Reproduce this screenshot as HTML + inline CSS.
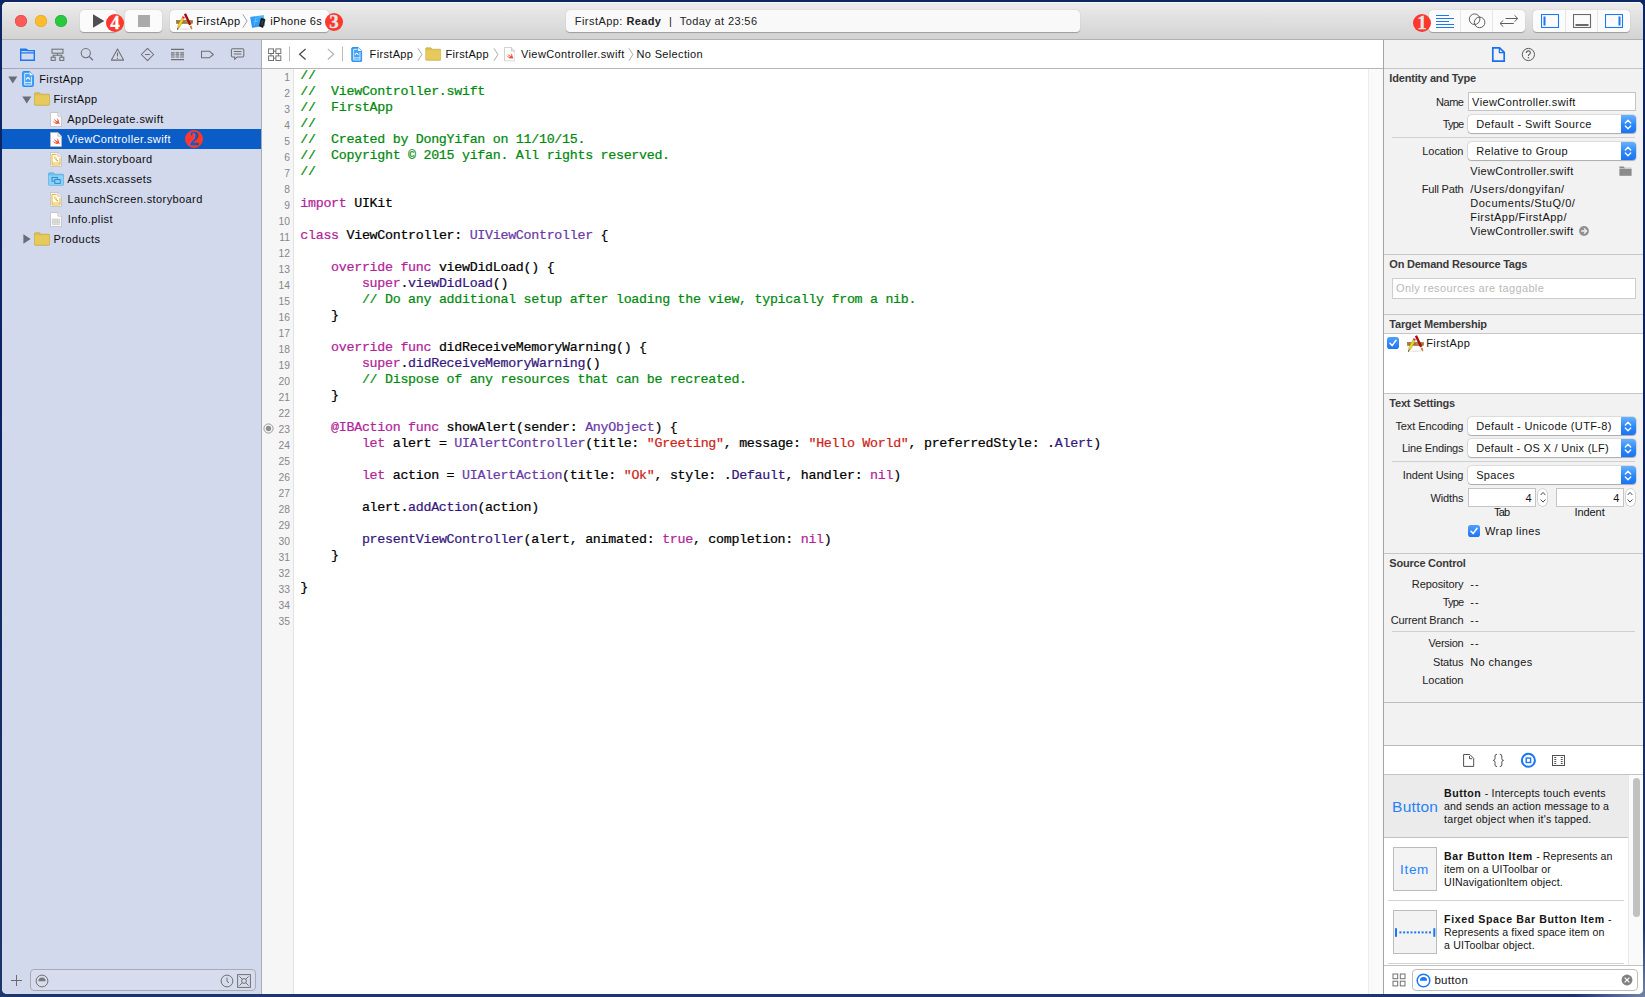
<!DOCTYPE html>
<html><head>
<meta charset="utf-8">
<title>Xcode</title>
<style>
*{box-sizing:border-box;margin:0;padding:0}
html,body{width:1645px;height:997px;overflow:hidden}
body{background:radial-gradient(circle at 100% 100%,#7384a8 0,rgba(115,132,168,0) 70px),linear-gradient(#0d2665 0,#0b2362 40%,#1d376c 100%);font-family:"Liberation Sans",sans-serif;font-size:12px;color:#222;position:relative}
.abs{position:absolute}
#win{position:absolute;left:2px;top:2px;width:1641px;height:992px;border-radius:5px;overflow:hidden;background:#fff}
/* everything inside #win is positioned in page coordinates via #pg offset */
#pg{position:absolute;left:-2px;top:-2px;width:1645px;height:997px}
#tb{left:0;top:2px;width:1645px;height:37px;background:linear-gradient(#ececec,#e4e4e4 30%,#d3d3d3)}
#tbline{left:0;top:39px;width:1645px;height:1px;background:#b1b1b1}
.tl{position:absolute;top:15px;width:12px;height:12px;border-radius:50%}
.btn{position:absolute;top:10px;height:22px;background:#fbfbfb;border-radius:4px;box-shadow:0 0.5px 1px rgba(0,0,0,.28)}
.badge{position:absolute;width:18px;height:18px;border-radius:50%;background:#fc382d;color:#fff;font-family:"Liberation Serif",serif;font-weight:bold;font-size:19px;line-height:18px;text-align:center;-webkit-text-stroke:0.3px}
.act{top:11px;line-height:20px;font-size:11px;color:#232323;white-space:pre}
.jt{font-size:11px!important}
.t12{font-size:11px;white-space:nowrap;color:#111}
/* navigator */
#nav{left:0;top:40px;width:261px;height:957px;background:#d2d9ec}
#navline{left:261px;top:40px;width:1px;height:957px;background:#a9acb6}
#navbar-line{left:0;top:68px;width:261px;height:1px;background:#a6a9b3}
.row{position:absolute;left:2px;width:259px;height:20px}
.row .lbl{position:absolute;top:0;line-height:20px;font-size:11px;color:#0b0b0c;white-space:nowrap}
.row.sel{background:#0a5cc6}
.row.sel .lbl{color:#fff}
/* editor */
#jump{left:262px;top:40px;width:1122px;height:28px;background:#fff}
#jumpline{left:262px;top:68px;width:1122px;height:1px;background:#b5b5b5}
#gutter{left:262px;top:69px;width:31px;height:928px;background:#f6f6f6}
#gutterline{left:293px;top:69px;width:1px;height:928px;background:#e3e3e3}
#code{left:300.3px;top:68px;font-family:"Liberation Mono",monospace;font-size:13.3px;line-height:16px;white-space:pre;color:#000;letter-spacing:-0.281px;-webkit-text-stroke:0.22px}
#lnums{left:250px;top:69px;width:40px;text-align:right;font-family:"Liberation Sans",sans-serif;font-size:11.4px;line-height:16px;color:#86868d;white-space:pre;transform:scaleX(.9);transform-origin:100% 50%}
.c{color:#008a0c}.k{color:#b2239b}.t{color:#6a38a6}.f{color:#35167c}.s{color:#cc2418}
/* inspector */
#insp{left:1384px;top:40px;width:261px;height:957px;background:#f2f2f2}
#inspline{left:1383px;top:40px;width:1px;height:957px;background:#a5a5a5}
.hl{position:absolute;height:1px;background:#c8c8c8}
.sec{position:absolute;left:1389.3px;top:0;font-weight:bold;font-size:11px;color:#3a3a3a;white-space:nowrap;line-height:14px}
.lab{position:absolute;right:181.6px;top:0;font-size:11px;color:#222;white-space:nowrap;line-height:14px}
.lib{font-size:10.6px!important;color:#0c0c0c}
.val{position:absolute;left:1470px;top:0;font-size:11px;color:#131313;white-space:nowrap;line-height:14px}
.pop{position:absolute;left:1468px;width:168px;height:18px;background:#fff;border-radius:3.5px;box-shadow:0 0 0 0.5px rgba(0,0,0,.18),0 1px 1px rgba(0,0,0,.22);font-size:11px;line-height:18px;padding-left:8px;color:#1f1f1f;white-space:nowrap}
.pop i{position:absolute;right:0;top:0;width:15px;height:18px;border-radius:0 3.5px 3.5px 0;background:linear-gradient(#69b1fc,#2a88f7 55%,#1a74f4)}
.fld{position:absolute;background:#fff;border:1px solid #c4c4c4;font-size:11px;color:#1f1f1f;white-space:nowrap}
</style>
</head>
<body>
<div id="win"><div id="pg">

<!-- TOOLBAR -->
<div id="tb" class="abs"></div>
<div id="tbline" class="abs"></div>
<div class="abs" style="left:0;top:2px;width:1645px;height:1px;background:#f7f7f7"></div>
<div class="tl" style="left:15px;background:#fc5b57;box-shadow:inset 0 0 0 0.5px #de4038"></div>
<div class="tl" style="left:35px;background:#fdbb2e;box-shadow:inset 0 0 0 0.5px #dea023"></div>
<div class="tl" style="left:55px;background:#28c83f;box-shadow:inset 0 0 0 0.5px #1aab29"></div>

<svg width="0" height="0" style="position:absolute">
 <defs>
  <symbol id="appicon" viewBox="0 0 17 17">
   <ellipse cx="8.6" cy="16.2" rx="6" ry="0.6" fill="rgba(0,0,0,.12)"></ellipse>
   <rect x="0.5" y="7.5" width="16" height="2.9" fill="#a9762f" stroke="#7d5521" stroke-width="0.5"></rect>
   <path d="M3 8.9 H5 M9 8.9 H12.5" stroke="#d2a566" stroke-width="0.7"></path>
   <path d="M7.91 1.3 L10.09 0.3 L15.29 11.5 L13.11 12.5 Z" fill="#a50d0d"></path>
   <path d="M13.11 12.5 L15.29 11.5 L15.6 12.6 L13.5 13.6 Z" fill="#f4ecec"></path>
   <path d="M13.5 13.6 L15.6 12.6 L16.4 15.9 L15.3 16.5 Z" fill="#c58746"></path>
   <path d="M1.48 13.44 L3.72 14.56 L8.12 5.76 L5.88 4.64 Z" fill="#efe12f" stroke="#8f7f1c" stroke-width="0.35"></path>
   <path d="M3 14.2 L7.4 5.4" stroke="#c9b81f" stroke-width="0.5"></path>
   <path d="M1.48 13.44 L3.72 14.56 L1.5 16.3 Z" fill="#c9935a"></path>
   <circle cx="1.7" cy="16" r="0.65" fill="#1c1c1c"></circle>
   <path d="M5.88 4.64 L8.12 5.76 L8.9 4.2 L6.66 3.08 Z" fill="#f02a62"></path>
  </symbol>
  <symbol id="chev" viewBox="0 0 6 14">
   <path d="M0.8 0.3 L5.1 7 L0.8 13.7" fill="none" stroke="#929292" stroke-width="0.85"></path>
  </symbol>
 </defs>
</svg>
<!-- run / stop -->
<div class="btn" style="left:80px;width:37px"></div>
<svg class="abs" style="left:92px;top:13px" width="14" height="16" viewBox="0 0 14 16"><path d="M1 1.2 L12.3 8 L1 14.8 Z" fill="#4f4f4f"></path></svg>
<div class="btn" style="left:125px;width:37px"></div>
<div class="abs" style="left:138px;top:15px;width:12px;height:12px;background:#aaa"></div>
<div class="badge" style="left:106px;top:14px">4</div>
<!-- scheme -->
<div class="btn" style="left:170px;width:159px"></div>
<svg class="abs" style="left:175.5px;top:12.5px" width="17" height="17"><use href="#appicon"></use></svg>
<div class="abs t12" style="left: 196.2px; top: 10.7px; line-height: 20px; letter-spacing: 0.433px;">FirstApp</div>
<svg class="abs" style="left:241.5px;top:14px" width="6" height="14"><use href="#chev"></use></svg>
<svg class="abs" style="left:249px;top:12px" width="18" height="18" viewBox="0 0 18 18">
  <defs><linearGradient id="bpg" x1="0" y1="1" x2="1" y2="0"><stop offset="0" stop-color="#1f8ff5"></stop><stop offset="0.6" stop-color="#36a4f9"></stop><stop offset="1" stop-color="#58c6fc"></stop></linearGradient></defs>
  <path d="M1.1 5 L14.8 2.9 L15.9 13.8 L3.1 15.8 Z" fill="url(#bpg)"></path>
  <path d="M7.2 5.6 L6.2 9 M4.6 9.8 L9 9.2 M6 10.6 L5.2 13.4" stroke="#9ad6fc" stroke-width="0.6" fill="none"></path>
  <path d="M12.2 6.2 L16.1 7.5 L13.8 15.6 L10.3 14 Z" fill="#111" stroke="#111" stroke-width="0.6" stroke-linejoin="round"></path>
  <path d="M12.7 7.6 L15 8.4 L13.4 14 L11.2 13 Z" fill="#3a3634"></path>
</svg>
<div class="abs t12" style="left: 270.3px; top: 10.7px; line-height: 20px; letter-spacing: 0.308px;">iPhone 6s</div>
<div class="badge" style="left:325px;top:13px;color:#e0e9e9">3</div>
<!-- activity -->
<div class="btn" style="left:566px;width:514px;background:#f9f9f9"></div>
<div class="abs act" style="left: 574.8px; letter-spacing: 0.448px; top: 11.4px;">FirstApp:</div><div class="abs act" style="left: 626.6px; font-weight: bold; letter-spacing: 0.292px; top: 11.4px;">Ready</div><div class="abs act" style="left: 669px; top: 11.2px;">|</div><div class="abs act" style="left: 679.8px; letter-spacing: 0.387px; top: 11.4px;">Today at 23:56</div>
<!-- editor mode group -->
<div class="btn" style="left:1428.5px;width:96.5px"></div>
<div class="abs" style="left:1460px;top:10px;width:1px;height:22px;background:#e6e6e6"></div>
<div class="abs" style="left:1492px;top:10px;width:1px;height:22px;background:#e6e6e6"></div>
<svg class="abs" style="left:1436px;top:13px" width="19" height="16" viewBox="0 0 19 16"><path d="M0 2.5H13 M0 5.5H18 M0 8.5H13 M0 11.5H18 M0 14.5H18" stroke="#1b77f2" stroke-width="1" fill="none"></path></svg>
<svg class="abs" style="left:1468px;top:12px" width="19" height="18" viewBox="0 0 19 18"><circle cx="6.6" cy="7.2" r="5.3" fill="none" stroke="#5e5e5e" stroke-width="1"></circle><circle cx="11.6" cy="10.4" r="5.3" fill="none" stroke="#5e5e5e" stroke-width="1"></circle></svg>
<svg class="abs" style="left:1499px;top:12px" width="20" height="18" viewBox="0 0 20 18"><path d="M6.6 6.5H18.6 M15.5 3.3L18.8 6.5L15.5 9.7 M14.8 11.5H1.2 M4.3 8.3L1 11.5L4.3 14.7" stroke="#5e5e5e" stroke-width="1" fill="none"></path></svg>
<div class="badge" style="left:1413px;top:13.5px;color:#e0e9e9">1</div>
<!-- view group -->
<div class="btn" style="left:1533px;width:97px"></div>
<div class="abs" style="left:1565px;top:10px;width:1px;height:22px;background:#e6e6e6"></div>
<div class="abs" style="left:1597px;top:10px;width:1px;height:22px;background:#e6e6e6"></div>
<svg class="abs" style="left:1541px;top:14px" width="19" height="14" viewBox="0 0 19 14"><rect x="0.5" y="0.5" width="17" height="13" fill="none" stroke="#1b77f2" stroke-width="1.1"></rect><rect x="2.5" y="2.5" width="2" height="9" fill="#1b77f2"></rect></svg>
<svg class="abs" style="left:1573px;top:14px" width="19" height="14" viewBox="0 0 19 14"><rect x="0.5" y="0.5" width="17" height="13" fill="none" stroke="#686868" stroke-width="1.1"></rect><rect x="2.5" y="10" width="13" height="2" fill="#686868"></rect></svg>
<svg class="abs" style="left:1605px;top:14px" width="19" height="14" viewBox="0 0 19 14"><rect x="0.5" y="0.5" width="17" height="13" fill="none" stroke="#1b77f2" stroke-width="1.1"></rect><rect x="13.5" y="2.5" width="2" height="9" fill="#1b77f2"></rect></svg>
<!--TOOLBAR-ITEMS-->

<!-- NAVIGATOR -->
<div id="nav" class="abs"></div>
<div id="navline" class="abs"></div>
<div id="navbar-line" class="abs"></div>

<svg class="abs" style="left:0;top:40px" width="261" height="28" viewBox="0 40 261 28" fill="none" stroke="#707070" stroke-width="1.05">
 <!-- folder -->
 <g stroke="#1a78f3" stroke-width="1.4">
  <path d="M20.7 49.2 H26 L27 50.6 H34.3 V60.3 H20.7 Z"></path>
  <path d="M20.7 49.9 H26.6 V51" stroke-width="2"></path>
  <path d="M20.7 52.8 H34.3" stroke-width="1.2"></path>
 </g>
 <!-- hierarchy -->
 <rect x="52" y="49.2" width="11" height="4"></rect>
 <rect x="51.2" y="57.2" width="4" height="3.2"></rect><rect x="59.8" y="57.2" width="4" height="3.2"></rect>
 <path d="M57.5 53.2 V55.2 M53.2 57.2 V55.2 H61.8 V57.2"></path>
 <!-- search -->
 <circle cx="85.8" cy="53.1" r="4.6"></circle><path d="M89.1 56.4 L92.9 60.2" stroke-width="1.3"></path>
 <!-- warning -->
 <path d="M117.5 48.9 L123.6 60.1 H111.4 Z" stroke-linejoin="round"></path><path d="M117.5 52.6 V56.6 M117.5 57.7 V58.9" stroke-width="1.1"></path>
 <!-- diamond -->
 <path d="M147.5 48.4 L153.7 54.5 L147.5 60.6 L141.3 54.5 Z" stroke-linejoin="round"></path><path d="M145 54.5 H150"></path>
 <!-- list -->
 <path d="M171 49.4 H184 M171 59.6 H184" stroke-width="1.15"></path>
 <path d="M171 52.8 H174.6 M175.6 52.8 H179.2 M180.2 52.8 H184 M171 54.9 H174.6 M175.6 54.9 H179.2 M180.2 54.9 H184 M171 57 H174.6 M175.6 57 H179.2 M180.2 57 H184" stroke-width="1.15"></path>
 <!-- tag -->
 <path d="M201.5 51.3 H209.6 L213.3 54.5 L209.6 57.7 H201.5 Z" stroke-linejoin="round"></path>
 <!-- comment -->
 <path d="M232.6 48.7 H242.6 Q243.8 48.7 243.8 49.9 V55.8 Q243.8 57 242.6 57 H237.2 L234.6 59.2 V57 H232.6 Q231.4 57 231.4 55.8 V49.9 Q231.4 48.7 232.6 48.7 Z"></path>
 <path d="M233.8 51.5 H241.4 M233.8 54 H241.4"></path>
</svg>

<svg width="0" height="0" style="position:absolute"><defs>
 <symbol id="folder" viewBox="0 0 16 14">
  <path d="M0.5 1.6 Q0.5 0.8 1.3 0.8 H5.6 L6.9 2.2 H14.7 Q15.5 2.2 15.5 3 V12.6 Q15.5 13.3 14.7 13.3 H1.3 Q0.5 13.3 0.5 12.6 Z" fill="#dcbf4c" stroke="#c3a338" stroke-width="0.6"></path>
  <path d="M0.8 3.3 H15.2 V12.2 Q15.2 12.6 14.6 12.6 H1.4 Q0.8 12.6 0.8 12.2 Z" fill="#e6cb5c"></path>
 </symbol>
 <symbol id="swift" viewBox="0 0 12 15">
  <path d="M0.5 0.5 H7.8 L11.5 4.2 V14.5 H0.5 Z" fill="#fff" stroke="#b9b9b9" stroke-width="0.7"></path>
  <path d="M7.8 0.5 V4.2 H11.5" fill="#ececec" stroke="#b9b9b9" stroke-width="0.7"></path>
  <path d="M2.2 8.4 Q4.6 10.8 7 10.6 Q4.4 8.9 3.4 6.6 Q5.6 8.8 7.4 9.6 Q8 8 6.6 6 Q9.2 7.8 9.2 10.4 Q9.9 11.4 9.7 12.3 Q9 11.4 8.2 11.6 Q5 13 2.2 8.4 Z" fill="#ef4d33"></path>
 </symbol>
 <symbol id="sb" viewBox="0 0 12 15">
  <path d="M0.5 0.5 H7.8 L11.5 4.2 V14.5 H0.5 Z" fill="#fff" stroke="#b9b9b9" stroke-width="0.7"></path>
  <path d="M2 2.4 H6.6 M10 5.6 V13 H2 V2.4" fill="none" stroke="#e6b322" stroke-width="1"></path>
  <path d="M2 11 H10" stroke="#e6b322" stroke-width="0.9"></path>
  <path d="M3.8 5 Q6.6 4.6 6.4 7 Q6.2 9 8.4 8.6 M4.2 6.2 L7.6 9.4" fill="none" stroke="#e6b322" stroke-width="0.8"></path>
  <path d="M7.8 0.5 V4.2 H11.5" fill="#f2f2f2" stroke="#b9b9b9" stroke-width="0.7"></path>
 </symbol>
 <symbol id="plist" viewBox="0 0 12 15">
  <path d="M0.5 0.5 H7.8 L11.5 4.2 V14.5 H0.5 Z" fill="#fff" stroke="#b9b9b9" stroke-width="0.7"></path>
  <path d="M7.8 0.5 V4.2 H11.5" fill="#ececec" stroke="#b9b9b9" stroke-width="0.7"></path>
  <rect x="2.2" y="7" width="7.6" height="5.4" fill="#e9e9e9" stroke="#c2c2c2" stroke-width="0.6"></rect>
  <path d="M2.2 8.8 H9.8 M2.2 10.6 H9.8 M4.8 7 V12.4 M7.3 7 V12.4" stroke="#c2c2c2" stroke-width="0.6"></path>
 </symbol>
 <symbol id="proj" viewBox="0 0 11 15">
  <path d="M0.5 1.4 Q0.5 0.5 1.4 0.5 H7 L10.5 4 V13.6 Q10.5 14.5 9.6 14.5 H1.4 Q0.5 14.5 0.5 13.6 Z" fill="#43a2f7" stroke="#1f8bf2" stroke-width="0.9"></path>
  <path d="M6.9 0.6 L10.4 4.1 H6.9 Z" fill="#f3f9ff"></path>
  <path d="M2.4 2.4 H6.2 M8.7 5.2 V13 H2.4 V2.4" fill="none" stroke="#eef6ff" stroke-width="0.8"></path>
  <path d="M2.4 10.9 H8.7" stroke="#eef6ff" stroke-width="0.9"></path>
  <path d="M3.8 8 Q5.5 4.4 7.2 8" fill="none" stroke="#fff" stroke-width="1.1"></path>
 </symbol>
 <symbol id="xcassets" viewBox="0 0 16 14">
  <path d="M0.5 1.6 Q0.5 0.8 1.3 0.8 H5.6 L6.9 2.2 H14.7 Q15.5 2.2 15.5 3 V12.6 Q15.5 13.3 14.7 13.3 H1.3 Q0.5 13.3 0.5 12.6 Z" fill="#6dc0ee" stroke="#49a5da" stroke-width="0.6"></path>
  <path d="M0.8 3.4 H15.2 V12.5 Q15.2 13 14.6 13 H1.4 Q0.8 13 0.8 12.5 Z" fill="#8dd2f6"></path>
  <rect x="4" y="5.4" width="5.4" height="3.8" fill="none" stroke="#2386c8" stroke-width="0.9"></rect>
  <rect x="6.8" y="7.6" width="5.4" height="3.8" fill="#8dd2f6" stroke="#2386c8" stroke-width="0.9"></rect>
 </symbol>
</defs></svg>
<div class="row" style="top:69px"><svg class="abs" style="left:6px;top:6.5px" width="10" height="8"><path d="M0.3 0.4 H9.3 L4.8 7.6 Z" fill="#6a6d76"></path></svg><svg class="abs" style="left:20px;top:2px" width="12" height="16"><use href="#proj"></use></svg><span class="lbl" style="left: 37.2px; letter-spacing: 0.433px; top: 0px;">FirstApp</span></div>
<div class="row" style="top:89px"><svg class="abs" style="left:20px;top:6.5px" width="10" height="8"><path d="M0.3 0.4 H9.3 L4.8 7.6 Z" fill="#6a6d76"></path></svg><svg class="abs" style="left:32px;top:3px" width="16" height="14"><use href="#folder"></use></svg><span class="lbl" style="left: 51.5px; letter-spacing: 0.39px; top: 0px;">FirstApp</span></div>
<div class="row" style="top:109px"><svg class="abs" style="left:48.3px;top:2.7px" width="12" height="15"><use href="#swift"></use></svg><span class="lbl" style="left: 65.3px; letter-spacing: 0.452px; top: 0px;">AppDelegate.swift</span></div>
<div class="row sel" style="top:129px"><svg class="abs" style="left:48.3px;top:2.7px" width="12" height="15"><use href="#swift"></use></svg><span class="lbl" style="left: 65.3px; letter-spacing: 0.39px; top: 0px;">ViewController.swift</span><div class="badge" style="left:182.9px;top:1.2px;color:#0a5cc6">2</div></div>
<div class="row" style="top:149px"><svg class="abs" style="left:48.3px;top:2.7px" width="12" height="15"><use href="#sb"></use></svg><span class="lbl" style="left: 65.8px; letter-spacing: 0.395px; top: 0px;">Main.storyboard</span></div>
<div class="row" style="top:169px"><svg class="abs" style="left:46px;top:3px" width="16" height="14"><use href="#xcassets"></use></svg><span class="lbl" style="left: 65.2px; letter-spacing: 0.41px; top: 0px;">Assets.xcassets</span></div>
<div class="row" style="top:189px"><svg class="abs" style="left:48.3px;top:2.7px" width="12" height="15"><use href="#sb"></use></svg><span class="lbl" style="left: 65.5px; letter-spacing: 0.401px; top: 0px;">LaunchScreen.storyboard</span></div>
<div class="row" style="top:209px"><svg class="abs" style="left:48.3px;top:2.7px" width="12" height="15"><use href="#plist"></use></svg><span class="lbl" style="left: 65.8px; letter-spacing: 0.415px; top: 0px;">Info.plist</span></div>
<div class="row" style="top:229px"><svg class="abs" style="left:21px;top:5px" width="8" height="10"><path d="M0.4 0.3 V9.7 L7.6 5 Z" fill="#6a6d76"></path></svg><svg class="abs" style="left:32px;top:3px" width="16" height="14"><use href="#folder"></use></svg><span class="lbl" style="left: 51.6px; letter-spacing: 0.44px; top: 0px;">Products</span></div>
<!-- nav bottom bar -->
<svg class="abs" style="left:10px;top:974px" width="13" height="13"><path d="M6.5 1 V12 M1 6.5 H12" stroke="#6b6b6b" stroke-width="1" fill="none"></path></svg>
<div class="abs" style="left:30px;top:969px;width:226px;height:22px;border:1px solid #a9abb3;border-radius:4px;background:rgba(255,255,255,.12)"></div>
<svg class="abs" style="left:34.5px;top:973.5px" width="14" height="14" viewBox="0 0 14 14"><circle cx="7" cy="7" r="5.9" fill="none" stroke="#707070" stroke-width="1"></circle><path d="M3.4 7.2 A3.6 3.6 0 0 1 10.6 7.2 Z" fill="#7a7a7a"></path></svg>
<svg class="abs" style="left:219.5px;top:973.5px" width="14" height="14" viewBox="0 0 14 14"><circle cx="7" cy="7" r="5.9" fill="none" stroke="#707070" stroke-width="1"></circle><path d="M7 3.6 V7.3 L9 8.8" fill="none" stroke="#707070" stroke-width="1"></path></svg>
<svg class="abs" style="left:236.5px;top:973.5px" width="14" height="14" viewBox="0 0 14 14"><rect x="0.6" y="0.6" width="12.8" height="12.8" fill="none" stroke="#707070" stroke-width="1"></rect><circle cx="7" cy="7" r="2.4" fill="none" stroke="#707070" stroke-width="1"></circle><path d="M2.4 2.4 L5.3 5.3 M11.6 2.4 L8.7 5.3 M2.4 11.6 L5.3 8.7 M11.6 11.6 L8.7 8.7" stroke="#707070" stroke-width="1"></path></svg>
<!--NAV-ITEMS-->

<!-- EDITOR -->
<div id="jump" class="abs"></div>
<div id="jumpline" class="abs"></div>
<div id="gutter" class="abs"></div>
<div id="gutterline" class="abs"></div>
<div id="lnums" class="abs">1
2
3
4
5
6
7
8
9
10
11
12
13
14
15
16
17
18
19
20
21
22
23
24
25
26
27
28
29
30
31
32
33
34
35</div>
<div id="code" class="abs"><span class="c">//</span>
<span class="c">//  ViewController.swift</span>
<span class="c">//  FirstApp</span>
<span class="c">//</span>
<span class="c">//  Created by DongYifan on 11/10/15.</span>
<span class="c">//  Copyright © 2015 yifan. All rights reserved.</span>
<span class="c">//</span>

<span class="k">import</span> UIKit

<span class="k">class</span> ViewController: <span class="t">UIViewController</span> {

    <span class="k">override</span> <span class="k">func</span> viewDidLoad() {
        <span class="k">super</span>.<span class="f">viewDidLoad</span>()
        <span class="c">// Do any additional setup after loading the view, typically from a nib.</span>
    }

    <span class="k">override</span> <span class="k">func</span> didReceiveMemoryWarning() {
        <span class="k">super</span>.<span class="f">didReceiveMemoryWarning</span>()
        <span class="c">// Dispose of any resources that can be recreated.</span>
    }

    <span class="k">@IBAction</span> <span class="k">func</span> showAlert(sender: <span class="t">AnyObject</span>) {
        <span class="k">let</span> alert = <span class="t">UIAlertController</span>(title: <span class="s">"Greeting"</span>, message: <span class="s">"Hello World"</span>, preferredStyle: .<span class="f">Alert</span>)

        <span class="k">let</span> action = <span class="t">UIAlertAction</span>(title: <span class="s">"Ok"</span>, style: .<span class="f">Default</span>, handler: <span class="k">nil</span>)

        alert.<span class="f">addAction</span>(action)

        <span class="f">presentViewController</span>(alert, animated: <span class="k">true</span>, completion: <span class="k">nil</span>)
    }

}

</div>

<svg class="abs" style="left:262px;top:40px" width="460" height="28" viewBox="262 40 460 28" fill="none">
 <g stroke="#737373" stroke-width="1">
  <rect x="268.6" y="48.9" width="4.9" height="4.6"></rect><rect x="275.9" y="48.9" width="4.9" height="4.6"></rect>
  <rect x="268.6" y="55.9" width="4.9" height="4.6"></rect><rect x="275.9" y="55.9" width="4.9" height="4.6"></rect>
  <path d="M273.5 51.2 H275.9 M271 53.5 V55.9 M278.4 53.5 V55.9 M273.5 58.2 H275.9"></path>
 </g>
 <path d="M289.5 46.5 V61.5 M342.5 46.5 V61.5" stroke="#b9b9b9" stroke-width="1"></path>
 <path d="M305.6 48.9 L299.6 54.2 L305.6 59.5" stroke="#4d4d4d" stroke-width="1.3"></path>
 <path d="M327.8 48.9 L333.6 54.2 L327.8 59.5" stroke="#b4b4b4" stroke-width="1.2"></path>
</svg>
<svg class="abs" style="left:351px;top:46.5px" width="11.5" height="15"><use href="#proj"></use></svg>
<div class="abs t12 jt" style="left: 369.6px; top: 44px; line-height: 20px; letter-spacing: 0.333px;">FirstApp</div>
<svg class="abs" style="left:416.5px;top:47.5px" width="6" height="13"><use href="#chev"></use></svg>
<svg class="abs" style="left:424.5px;top:47px" width="16.5" height="14"><use href="#folder"></use></svg>
<div class="abs t12 jt" style="left: 445.4px; top: 44px; line-height: 20px; letter-spacing: 0.333px;">FirstApp</div>
<svg class="abs" style="left:492.5px;top:47.5px" width="6" height="13"><use href="#chev"></use></svg>
<svg class="abs" style="left:503.5px;top:47px" width="11.5" height="14.5"><use href="#swift"></use></svg>
<div class="abs t12 jt" style="left: 521px; top: 44px; line-height: 20px; letter-spacing: 0.396px;">ViewController.swift</div>
<svg class="abs" style="left:628px;top:47.5px" width="6" height="13"><use href="#chev"></use></svg>
<div class="abs t12 jt" style="left: 636.5px; top: 44px; line-height: 20px; letter-spacing: 0.348px;">No Selection</div>
<!-- breakpoint-ish IBAction circle at line 23 -->
<svg class="abs" style="left:262.5px;top:422.5px" width="11" height="11" viewBox="0 0 11 11"><circle cx="5.5" cy="5.5" r="4.6" fill="none" stroke="#8f8f8f" stroke-width="0.9"></circle><circle cx="5.5" cy="5.5" r="2.7" fill="#8f8f8f"></circle></svg>
<!-- editor scroller strip -->
<div class="abs" style="left:1368px;top:69px;width:15px;height:928px;background:#fafafa;border-left:1px solid #ececec"></div>
<!--EDITOR-ITEMS-->

<!-- INSPECTOR -->
<div id="insp" class="abs"></div>
<div id="inspline" class="abs"></div>
<div class="hl" style="left:1384px;top:68px;width:261px;background:#c6c6c6"></div>
<svg class="abs" style="left:1491px;top:46px" width="15" height="17" viewBox="0 0 15 17"><path d="M1.8 1.9 H8.6 L13.2 6.4 V15.2 H1.8 Z" fill="none" stroke="#1672f2" stroke-width="1.7" stroke-linejoin="miter"></path><path d="M8.4 2 V6.6 H13" fill="none" stroke="#1672f2" stroke-width="1.3"></path></svg>
<svg class="abs" style="left:1521px;top:47px" width="15" height="15" viewBox="0 0 15 15"><circle cx="7.4" cy="7.5" r="6.1" fill="none" stroke="#5a5a5a" stroke-width="1"></circle><path d="M5.4 5.9 Q5.4 3.9 7.4 3.9 Q9.4 3.9 9.4 5.7 Q9.4 6.8 8.2 7.4 Q7.4 7.9 7.4 8.9" fill="none" stroke="#5a5a5a" stroke-width="1.1"></path><circle cx="7.4" cy="10.8" r="0.75" fill="#5a5a5a"></circle></svg>
<div class="sec" style="letter-spacing: -0.171px; top: 71.2px;">Identity and Type</div>
<div class="lab" style="letter-spacing: -0.515px; top: 94.7px;">Name</div>
<div class="fld" style="left:1468px;top:92px;width:168px;height:19px"></div>
<div class="val" style="left: 1472.1px; letter-spacing: 0.396px; top: 94.7px;">ViewController.swift</div>
<div class="lab" style="letter-spacing: -0.82px; top: 116.8px;">Type</div>
<div class="pop" style="top:115.2px"><i></i><svg class="abs" style="right:4px;top:3.5px" width="8" height="11" viewBox="0 0 8 11"><path d="M1.3 4 L4 1.3 L6.7 4 M1.3 7 L4 9.7 L6.7 7" fill="none" stroke="#fff" stroke-width="1.3" stroke-linecap="round" stroke-linejoin="round"></path></svg></div><div class="val" style="left: 1476.2px; letter-spacing: 0.425px; top: 116.5px;">Default - Swift Source</div>
<div class="hl" style="left:1392px;top:137px;width:243px;background:#d0d0d0"></div>
<div class="lab" style="letter-spacing: -0.056px; top: 144.2px;">Location</div>
<div class="pop" style="top:142.2px"><i></i><svg class="abs" style="right:4px;top:3.5px" width="8" height="11" viewBox="0 0 8 11"><path d="M1.3 4 L4 1.3 L6.7 4 M1.3 7 L4 9.7 L6.7 7" fill="none" stroke="#fff" stroke-width="1.3" stroke-linecap="round" stroke-linejoin="round"></path></svg></div><div class="val" style="left: 1476.2px; letter-spacing: 0.368px; top: 143.5px;">Relative to Group</div>
<div class="val" style="left: 1470.2px; letter-spacing: 0.385px; top: 163.5px;">ViewController.swift</div>
<svg class="abs" style="left:1618.5px;top:166px" width="13" height="10" viewBox="0 0 13 10"><path d="M0.4 0.4 H4.6 L5.6 1.8 H6 V2.4 H0.4 Z" fill="#8a8a8a"></path><rect x="0.4" y="3" width="12.2" height="6.8" fill="#8a8a8a"></rect><path d="M6 1.8 H12.6 V2.6 H6Z" fill="#a5a5a5"></path></svg>
<div class="lab" style="letter-spacing: -0.203px; top: 181.6px;">Full Path</div>
<div class="val" style="left: 1470.2px; letter-spacing: 0.518px; top: 181.6px;">/Users/dongyifan/</div>
<div class="val" style="left: 1470.2px; letter-spacing: 0.544px; top: 195.6px;">Documents/StuQ/0/</div>
<div class="val" style="left: 1470.2px; letter-spacing: 0.486px; top: 209.6px;">FirstApp/FirstApp/</div>
<div class="val" style="left: 1470.2px; letter-spacing: 0.385px; top: 223.8px;">ViewController.swift</div>
<svg class="abs" style="left:1579px;top:226px" width="10" height="10" viewBox="0 0 10 10"><circle cx="5" cy="5" r="4.9" fill="#909090"></circle><path d="M2.2 5 H7.2 M5 2.4 L7.6 5 L5 7.6" fill="none" stroke="#f2f2f2" stroke-width="1.3"></path></svg>
<div class="hl" style="left:1384px;top:254px;width:261px;background:#c6c6c6"></div>
<div class="sec" style="letter-spacing: -0.216px; top: 256.8px;">On Demand Resource Tags</div>
<div class="fld" style="left:1392px;top:278px;width:244px;height:21px;border-color:#cdcdcd"></div>
<div class="val" style="left: 1396.1px; color: rgb(185, 185, 185); letter-spacing: 0.366px; top: 280.5px;">Only resources are taggable</div>
<div class="hl" style="left:1384px;top:314px;width:261px;background:#c6c6c6"></div>
<div class="sec" style="letter-spacing: -0.179px; top: 317px;">Target Membership</div>
<div class="hl" style="left:1384px;top:333px;width:261px;background:#c6c6c6"></div>
<div class="abs" style="left:1384px;top:334px;width:261px;height:59px;background:#fff"></div>
<div class="abs" style="left:1387.2px;top:337px;width:12px;height:12px;border-radius:2.8px;background:linear-gradient(#4ea0fa,#1f73f5)"></div><svg class="abs" style="left:1387.2px;top:337px" width="12" height="12" viewBox="0 0 12 12"><path d="M3 6.3 L5.1 8.6 L9 3.3" fill="none" stroke="#fff" stroke-width="1.5" stroke-linecap="round" stroke-linejoin="round"></path></svg>
<svg class="abs" style="left:1406.5px;top:334.5px" width="17" height="17"><use href="#appicon"></use></svg>
<div class="val" style="left: 1426.2px; letter-spacing: 0.39px; top: 335.7px;">FirstApp</div>
<div class="hl" style="left:1384px;top:393px;width:261px;background:#c6c6c6"></div>
<div class="sec" style="letter-spacing: -0.197px; top: 395.8px;">Text Settings</div>
<div class="lab" style="letter-spacing: -0.084px; top: 418.7px;">Text Encoding</div>
<div class="pop" style="top:417.2px"><i></i><svg class="abs" style="right:4px;top:3.5px" width="8" height="11" viewBox="0 0 8 11"><path d="M1.3 4 L4 1.3 L6.7 4 M1.3 7 L4 9.7 L6.7 7" fill="none" stroke="#fff" stroke-width="1.3" stroke-linecap="round" stroke-linejoin="round"></path></svg></div><div class="val" style="left: 1476.2px; letter-spacing: 0.365px; top: 418.5px;">Default - Unicode (UTF-8)</div>
<div class="lab" style="letter-spacing: -0.174px; top: 440.9px;">Line Endings</div>
<div class="pop" style="top:439.3px"><i></i><svg class="abs" style="right:4px;top:3.5px" width="8" height="11" viewBox="0 0 8 11"><path d="M1.3 4 L4 1.3 L6.7 4 M1.3 7 L4 9.7 L6.7 7" fill="none" stroke="#fff" stroke-width="1.3" stroke-linecap="round" stroke-linejoin="round"></path></svg></div><div class="val" style="left: 1476.2px; letter-spacing: 0.287px; top: 440.6px;">Default - OS X / Unix (LF)</div>
<div class="hl" style="left:1392px;top:461px;width:243px;background:#d0d0d0"></div>
<div class="lab" style="letter-spacing: -0.088px; top: 467.8px;">Indent Using</div>
<div class="pop" style="top:466.3px"><i></i><svg class="abs" style="right:4px;top:3.5px" width="8" height="11" viewBox="0 0 8 11"><path d="M1.3 4 L4 1.3 L6.7 4 M1.3 7 L4 9.7 L6.7 7" fill="none" stroke="#fff" stroke-width="1.3" stroke-linecap="round" stroke-linejoin="round"></path></svg></div><div class="val" style="left: 1476.2px; letter-spacing: 0.319px; top: 467.6px;">Spaces</div>
<div class="lab" style="letter-spacing: -0.125px; top: 490.7px;">Widths</div>
<div class="fld" style="left:1468px;top:488px;width:68px;height:19px"></div>
<div class="val" style="left: auto; right: 113.4px; top: 490.7px;">4</div>
<div class="abs" style="left:1537.7px;top:488.6px;width:9.6px;height:17.8px;border-radius:4.8px;background:#fff;box-shadow:0 0 0 0.6px rgba(0,0,0,.22),0 0.5px 0.5px rgba(0,0,0,.12)"></div><svg class="abs" style="left:1537.5px;top:488.2px" width="10" height="18.5" viewBox="0 0 10 18.5"><path d="M2.6 7 L5 4.4 L7.4 7 M2.6 11.5 L5 14.1 L7.4 11.5" fill="none" stroke="#4a4a4a" stroke-width="1"></path></svg>
<div class="fld" style="left:1556px;top:488px;width:68px;height:19px"></div>
<div class="val" style="left: auto; right: 25.6px; top: 490.7px;">4</div>
<div class="abs" style="left:1625.6px;top:488.6px;width:9.6px;height:17.8px;border-radius:4.8px;background:#fff;box-shadow:0 0 0 0.6px rgba(0,0,0,.22),0 0.5px 0.5px rgba(0,0,0,.12)"></div><svg class="abs" style="left:1625.4px;top:488.2px" width="10" height="18.5" viewBox="0 0 10 18.5"><path d="M2.6 7 L5 4.4 L7.4 7 M2.6 11.5 L5 14.1 L7.4 11.5" fill="none" stroke="#4a4a4a" stroke-width="1"></path></svg>
<div class="val" style="left: 1494px; letter-spacing: -0.775px; top: 504.8px;">Tab</div>
<div class="val" style="left: 1574.6px; letter-spacing: -0.099px; top: 504.8px;">Indent</div>
<div class="abs" style="left:1468px;top:525px;width:12px;height:12px;border-radius:2.8px;background:linear-gradient(#4ea0fa,#1f73f5)"></div><svg class="abs" style="left:1468px;top:525px" width="12" height="12" viewBox="0 0 12 12"><path d="M3 6.3 L5.1 8.6 L9 3.3" fill="none" stroke="#fff" stroke-width="1.5" stroke-linecap="round" stroke-linejoin="round"></path></svg>
<div class="val" style="left: 1485px; letter-spacing: 0.393px; top: 524.1px;">Wrap lines</div>
<div class="hl" style="left:1384px;top:553px;width:261px;background:#c6c6c6"></div>
<div class="sec" style="letter-spacing: -0.219px; top: 556px;">Source Control</div>
<div class="lab" style="letter-spacing: -0.098px; top: 576.6px;">Repository</div>
<div class="val" style="left: 1470.2px; letter-spacing: 1.072px; top: 576.6px;">--</div>
<div class="lab" style="letter-spacing: -0.82px; top: 594.6px;">Type</div>
<div class="val" style="left: 1470.2px; letter-spacing: 1.072px; top: 594.6px;">--</div>
<div class="lab" style="letter-spacing: -0.13px; top: 613px;">Current Branch</div>
<div class="val" style="left: 1470.2px; letter-spacing: 1.072px; top: 613px;">--</div>
<div class="hl" style="left:1392px;top:631px;width:243px;background:#d0d0d0"></div>
<div class="lab" style="letter-spacing: -0.267px; top: 635.7px;">Version</div>
<div class="val" style="left: 1470.2px; letter-spacing: 1.072px; top: 635.7px;">--</div>
<div class="lab" style="letter-spacing: -0.117px; top: 654.8px;">Status</div>
<div class="val" style="left: 1470.2px; letter-spacing: 0.365px; top: 654.8px;">No changes</div>
<div class="lab" style="letter-spacing: -0.056px; top: 672.8px;">Location</div>
<div class="hl" style="left:1384px;top:702px;width:261px;background:#bdbdbd"></div>
<div class="hl" style="left:1384px;top:745px;width:261px;background:#b9b9b9"></div>
<div class="abs" style="left:1384px;top:746px;width:261px;height:28px;background:#fff"></div>
<div class="hl" style="left:1384px;top:774px;width:261px;background:#c4c4c4"></div>
<svg class="abs" style="left:1384px;top:746px" width="261" height="28" viewBox="1384 746 261 28" fill="none" stroke="#4f4f4f" stroke-width="1">
 <path d="M1463.6 754.5 H1469.8 L1473.7 758.4 V766.4 H1463.6 Z M1469.5 756 V758.7 H1472.2"></path>
 <path d="M1497 754.3 Q1495 754.3 1495 756 V758.6 Q1495 760.2 1493.3 760.4 Q1495 760.6 1495 762.2 V764.8 Q1495 766.6 1497 766.6 M1499.8 754.3 Q1501.8 754.3 1501.8 756 V758.6 Q1501.8 760.2 1503.5 760.4 Q1501.8 760.6 1501.8 762.2 V764.8 Q1501.8 766.6 1499.8 766.6"></path>
 <circle cx="1528.4" cy="760.3" r="6.5" stroke="#1a78f3" stroke-width="2"></circle><rect x="1526.2" y="758.1" width="4.4" height="4.4" stroke="#1a78f3" stroke-width="1.4"></rect>
 <rect x="1552.5" y="755.5" width="12" height="10"></rect>
 <path d="M1554.3 757.5 H1556.2 M1554.3 759.5 H1556.2 M1554.3 761.5 H1556.2 M1554.3 763.5 H1556.2 M1560.8 757.5 H1562.7 M1560.8 759.5 H1562.7 M1560.8 761.5 H1562.7 M1560.8 763.5 H1562.7" stroke-width="1"></path>
</svg>
<div class="abs" style="left:1384px;top:775px;width:261px;height:190px;background:#fff"></div>
<div class="abs" style="left:1384px;top:775px;width:244px;height:62px;background:#ebebeb"></div>
<div class="hl" style="left:1384px;top:837px;width:244px;background:#c2c2c2"></div>
<div class="abs" style="left:1628px;top:775px;width:17px;height:190px;background:#fafafa;border-left:1px solid #e8e8e8"></div>
<div class="abs" style="left:1632.5px;top:778px;width:7px;height:139px;border-radius:3.5px;background:#c1c1c1"></div>
<div class="val" style="left: 1392.1px; font-size: 15.5px; color: rgb(31, 132, 247); letter-spacing: 0.217px; top: 799.6px;">Button</div>
<div class="val lib" style="left: 1444.1px; font-weight: bold; letter-spacing: 0.495px; top: 785.6px;">Button</div><div class="val lib" style="left: 1484.7px; letter-spacing: 0.199px; top: 785.6px;">- Intercepts touch events</div>
<div class="val lib" style="left: 1444.1px; letter-spacing: 0.114px; top: 798.5px;">and sends an action message to a</div>
<div class="val lib" style="left: 1444.1px; letter-spacing: 0.226px; top: 811.7px;">target object when it's tapped.</div>
<div class="abs" style="left:1393px;top:847px;width:44px;height:44px;background:#f3f3f3;border:1px solid #bcbcbc"></div>
<div class="val" style="left: 1400.1px; font-size: 13.5px; color: rgb(31, 132, 247); letter-spacing: 0.645px; top: 862.6px;">Item</div>
<div class="val lib" style="left: 1444.1px; font-weight: bold; letter-spacing: 0.618px; top: 849px;">Bar Button Item</div><div class="val lib" style="left: 1536.2px; letter-spacing: 0.059px; top: 849px;">- Represents an</div>
<div class="val lib" style="left: 1444.1px; letter-spacing: 0.113px; top: 861.6px;">item on a UIToolbar or</div>
<div class="val lib" style="left: 1444.1px; letter-spacing: 0.143px; top: 874.7px;">UINavigationItem object.</div>
<div class="hl" style="left:1388px;top:900px;width:236px;background:#d4d4d4"></div>
<div class="abs" style="left:1393px;top:910px;width:44px;height:44px;background:#f3f3f3;border:1px solid #bcbcbc"></div>
<svg class="abs" style="left:1393px;top:910px" width="44" height="44" viewBox="1393 910 44 44" fill="#1a78f3"><rect x="1395" y="928.2" width="2" height="8.6"></rect><rect x="1433.3" y="928.2" width="2" height="8.6"></rect><rect x="1399.40" y="931.4" width="2" height="2"></rect><rect x="1403.10" y="931.4" width="2" height="2"></rect><rect x="1406.80" y="931.4" width="2" height="2"></rect><rect x="1410.50" y="931.4" width="2" height="2"></rect><rect x="1414.20" y="931.4" width="2" height="2"></rect><rect x="1417.90" y="931.4" width="2" height="2"></rect><rect x="1421.60" y="931.4" width="2" height="2"></rect><rect x="1425.30" y="931.4" width="2" height="2"></rect><rect x="1429.00" y="931.4" width="2" height="2"></rect></svg>
<div class="val lib" style="left: 1444.1px; font-weight: bold; letter-spacing: 0.61px; top: 911.5px;">Fixed Space Bar Button Item</div><div class="val lib" style="left: 1607.9px; top: 911.5px;">-</div>
<div class="val lib" style="left: 1444.1px; letter-spacing: 0.099px; top: 924.7px;">Represents a fixed space item on</div>
<div class="val lib" style="left: 1444.1px; letter-spacing: 0.12px; top: 937.5px;">a UIToolbar object.</div>
<div class="hl" style="left:1388px;top:963px;width:236px;background:#d4d4d4"></div>
<div class="abs" style="left:1384px;top:965px;width:261px;height:32px;background:#fff;border-top:1px solid #c2c2c2"></div>
<svg class="abs" style="left:1391.5px;top:973px" width="14" height="14" viewBox="0 0 14 14" fill="none" stroke="#707070" stroke-width="1"><rect x="1" y="1" width="4.7" height="4.7"></rect><rect x="8.3" y="1" width="4.7" height="4.7"></rect><rect x="1" y="8.2" width="4.7" height="4.7"></rect><rect x="8.3" y="8.2" width="4.7" height="4.7"></rect></svg>
<div class="abs" style="left:1412px;top:969px;width:226px;height:22px;background:#fff;border:1px solid #bdbdbd;border-radius:4px"></div>
<svg class="abs" style="left:1415.7px;top:972.9px" width="15" height="15" viewBox="0 0 15 15"><circle cx="7.5" cy="7.5" r="6.3" fill="none" stroke="#1a78f3" stroke-width="1.5"></circle><path d="M3.9 7.7 A3.6 3.6 0 0 1 11.1 7.7 Z" fill="#1a78f3"></path></svg>
<div class="val" style="left: 1434.4px; font-size: 11.5px; letter-spacing: 0.283px; top: 973px;">button</div>
<svg class="abs" style="left:1621.4px;top:974.4px" width="12" height="12" viewBox="0 0 12 12"><circle cx="6" cy="6" r="5.45" fill="#808080"></circle><path d="M3.6 3.6 L8.4 8.4 M8.4 3.6 L3.6 8.4" stroke="#fff" stroke-width="1.15"></path></svg>
<!--INSP-ITEMS-->

</div></div>


</body></html>
